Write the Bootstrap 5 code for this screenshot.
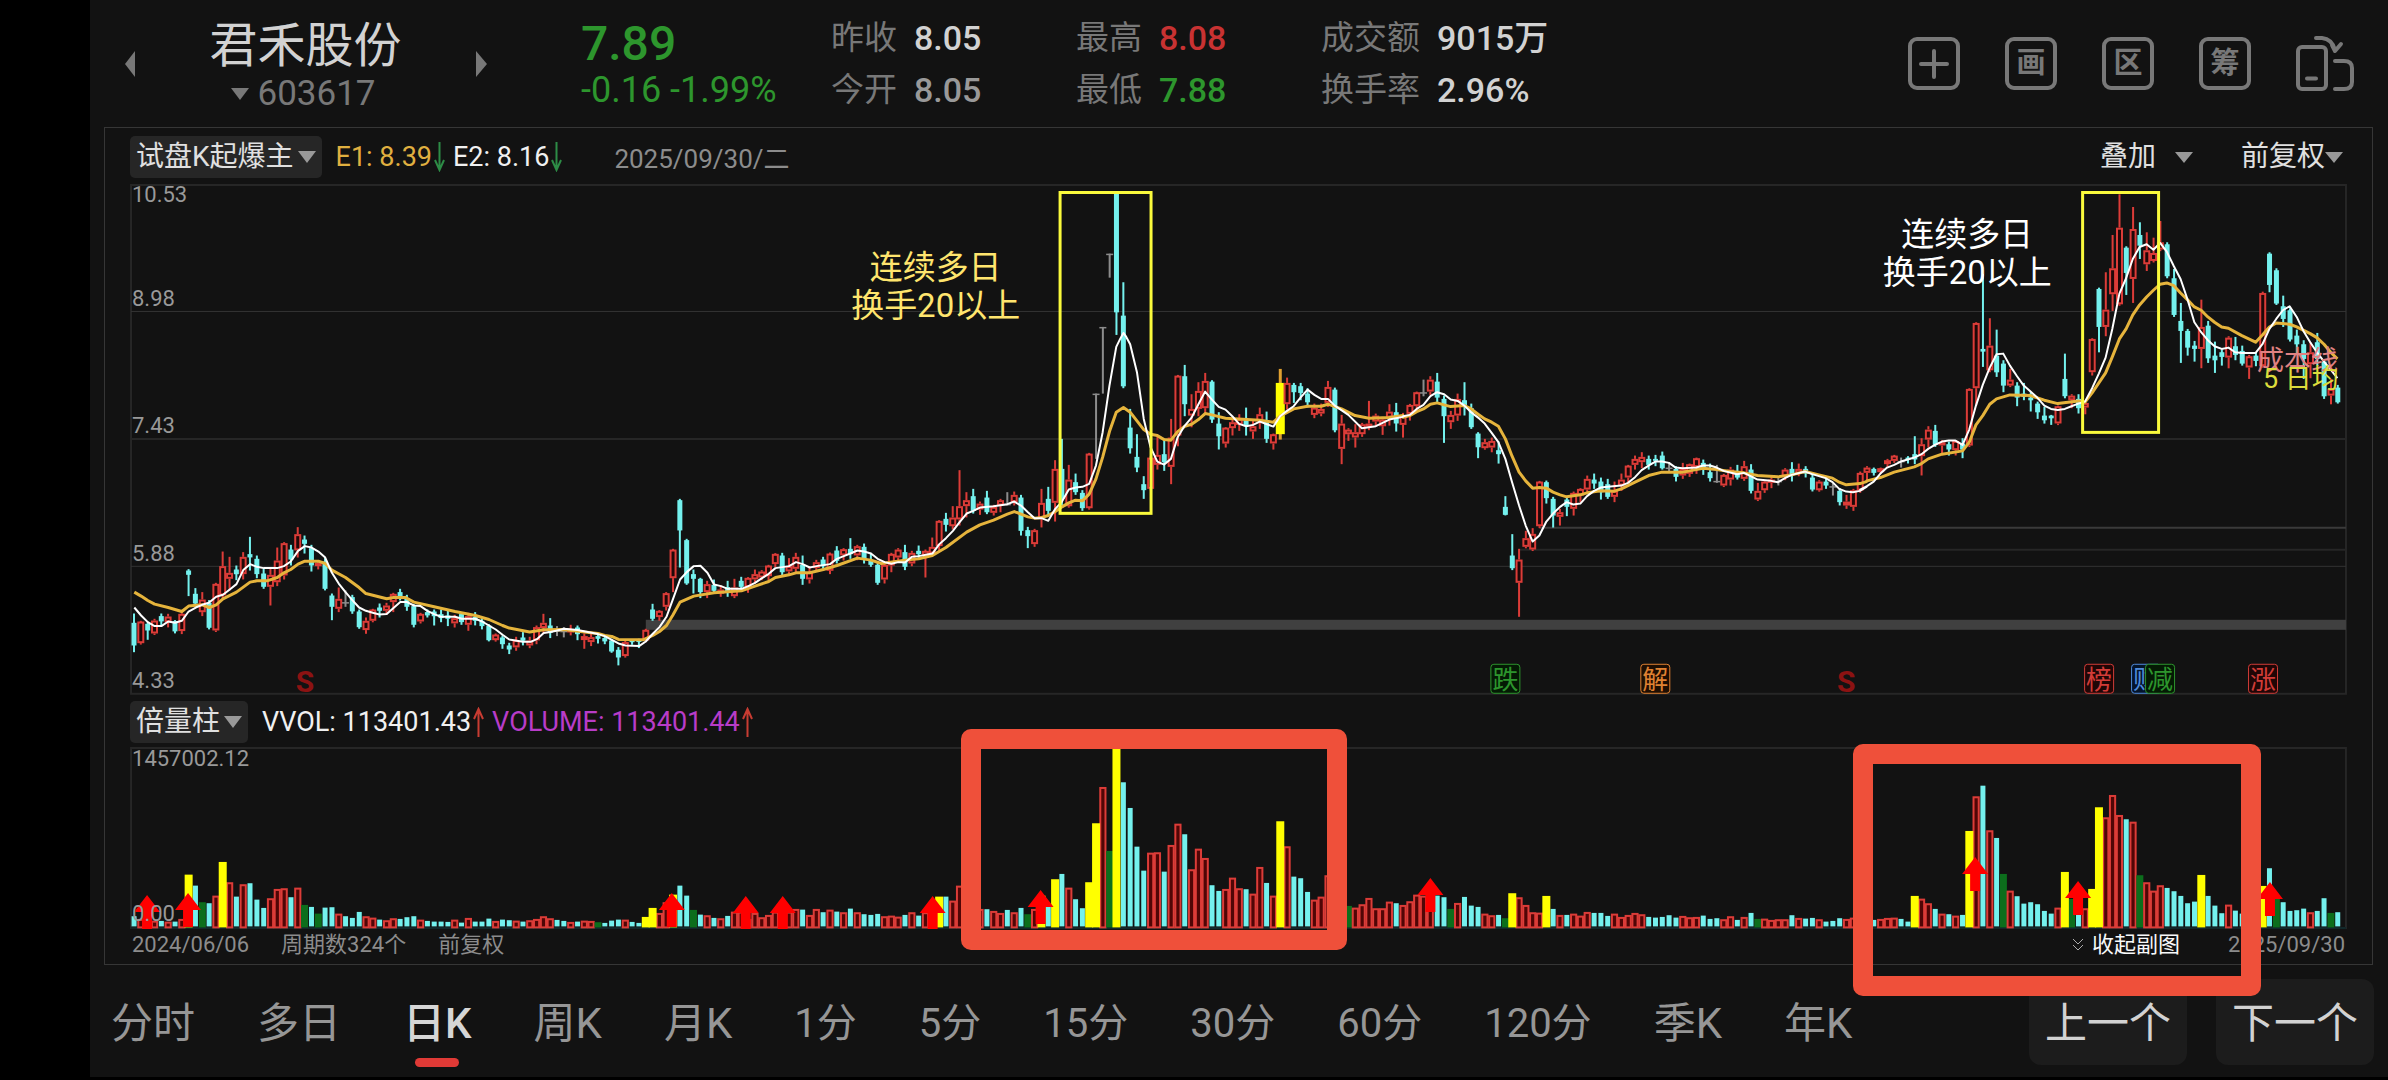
<!DOCTYPE html>
<html lang="zh-CN">
<head>
<meta charset="utf-8">
<meta name="viewport" content="width=device-width, initial-scale=1">
<title>君禾股份 603617</title>
<link rel="stylesheet" href="https://cdn.jsdelivr.net/npm/bootstrap@5.3.0/dist/css/bootstrap.min.css">
<style>
body{background:#000;color:#d2d2d2;font-family:Roboto,"Noto Sans CJK SC",sans-serif;min-height:100vh}
button{font-family:inherit}
.app-shell{margin-left:90px;background:#121212;min-height:1077px}
.top-bar{height:127px;padding:0 34px 0 35px}
.plain-btn{background:none;border:0;padding:0;color:inherit;line-height:1;display:flex;align-items:center}
.stock-picker{width:362px;margin-right:94px}
.stock-name{font-size:48px;line-height:60px;color:#d2d2d2}
.stock-code{font-size:35px;line-height:36px;color:#787878;gap:8px;padding-right:4px}
.price-box{width:250px;color:#2d962d;font-weight:500}
.price-now{font-size:48px;line-height:52px}
.price-diff{font-size:36px;line-height:40px;white-space:nowrap;font-weight:400}
.quote-col{width:245px;font-size:34px;line-height:52px;margin:0}
.quote-col dt{font-weight:400;color:#787878;font-size:33px}
.quote-col dd{margin:0;font-weight:500}
.quote-col .pair{display:flex;gap:17px;white-space:nowrap}
.c-down{color:#2d962d}.c-up{color:#c83232}.c-flat{color:#999}
.tool-set{gap:45px;color:#787878}
.tool-box{width:52px;height:53px;border:4px solid #787878;border-radius:9px;justify-content:center;font-size:29px;font-weight:700}
.panel-box{margin:0 15px 0 14px;border:1px solid #363636;padding:0 25px;height:838px}
.bar-row{height:56px;padding-top:2px;font-size:27px}
.bar-row.second{height:52px}
.side-btn{font-size:28px;color:#e0e0e0}
.pick-btn{background:#262626;border-radius:5px;height:42px;padding:0 6px;font-size:28px;color:#e0e0e0;gap:4px;margin-right:14px}
.ind-val{display:flex;align-items:center;gap:2px;color:#f0f0f0;white-space:nowrap}
.c-gold{color:#e0b040}.c-violet{color:#b83cc8}
.date-txt{color:#8c8c8c;font-size:26px}
.chart-svg{display:block;width:100%;height:auto}
.foot-row{font-size:22px;line-height:32px;color:#8c8c8c;padding:0 2px}
.foot-item{margin-left:32px}
.mark-frame{position:absolute;border:20px solid #ef503a;border-radius:10px;z-index:3;pointer-events:none}
.frame-a{left:37.5%;width:17.4%;top:-18px;height:221px}
.frame-b{left:77.7%;width:18.4%;top:-3px;height:252px}
.period-bar{height:112px;padding:2px 14px 0 21px}
.period-list{gap:62px;font-size:42px;padding-top:3px}
.period-list a{color:#969696;text-decoration:none;line-height:60px;position:relative;white-space:nowrap}
.period-list a.minute{font-size:40px}
.period-list a.active{color:#d6d6d6;font-weight:500}
.period-list a.active::after{content:"";position:absolute;left:50%;margin-left:-22px;bottom:-13px;width:44px;height:9px;border-radius:5px;background:#e03a36}
.step-btn{background:#1c1c1c;border-radius:12px;width:158px;height:86px;padding-top:4px;font-size:42px;color:#d2d2d2;justify-content:center}
svg text{font-family:Roboto,"Noto Sans CJK SC",sans-serif}
</style>
<script src="https://cdn.jsdelivr.net/npm/bootstrap@5.3.0/dist/js/bootstrap.bundle.min.js"></script>
</head>
<body>
<div class="app-shell">
  <header class="top-bar d-flex align-items-center">
    <div class="stock-picker d-flex align-items-center justify-content-between">
      <button class="plain-btn" aria-label="上一只"><svg width="10" height="26"><path d="M10 0V26L0 13Z" fill="#787878"/></svg></button>
      <div class="text-center">
        <div class="stock-name">君禾股份</div>
        <div class="stock-code d-flex align-items-center justify-content-center"><svg width="18" height="12"><path d="M0 0H18L9 12Z" fill="#787878"/></svg>603617</div>
      </div>
      <button class="plain-btn" aria-label="下一只"><svg width="11" height="26"><path d="M0 0V26L11 13Z" fill="#787878"/></svg></button>
    </div>
    <div class="price-box"><div class="price-now">7.89</div><div class="price-diff">-0.16 -1.99%</div></div>
    <dl class="quote-col"><div class="pair"><dt>昨收</dt><dd>8.05</dd></div><div class="pair"><dt>今开</dt><dd class="c-flat">8.05</dd></div></dl>
    <dl class="quote-col"><div class="pair"><dt>最高</dt><dd class="c-up">8.08</dd></div><div class="pair"><dt>最低</dt><dd class="c-down">7.88</dd></div></dl>
    <dl class="quote-col"><div class="pair"><dt>成交额</dt><dd>9015万</dd></div><div class="pair"><dt>换手率</dt><dd>2.96%</dd></div></dl>
    <div class="tool-set d-flex align-items-center ms-auto">
      <button class="plain-btn tool-box" aria-label="添加"><svg width="30" height="30" stroke="#787878" stroke-width="4" stroke-linecap="round"><path d="M15 2V28M2 15H28"/></svg></button>
      <button class="plain-btn tool-box">画</button>
      <button class="plain-btn tool-box">区</button>
      <button class="plain-btn tool-box">筹</button>
      <button class="plain-btn" aria-label="旋转屏幕"><svg width="58" height="56" fill="none" stroke="#787878" stroke-width="4" stroke-linecap="round" stroke-linejoin="round"><rect x="2" y="11" width="28" height="42" rx="4"/><path d="M11 42.500H20M39 25H48Q56 25 56 32V46Q56 53 48 53H39M20 2H26Q36 3 39 14M39 15L45 8M39 15L36 9"/></svg></button>
    </div>
  </header>

  <main class="panel-box">
    <div class="bar-row d-flex align-items-center">
      <button class="plain-btn pick-btn">试盘K起爆主<svg width="18" height="12"><path d="M0 0H18L9 12Z" fill="#999"/></svg></button>
      <span class="ind-val c-gold me-2">E1: 8.39<svg width="11" height="30" fill="none" stroke="#2d8c46" stroke-width="2"><path d="M5.500 0V28M1 18L5.500 28L10 18"/></svg></span>
      <span class="ind-val">E2: 8.16<svg width="11" height="30" fill="none" stroke="#2d8c46" stroke-width="2"><path d="M5.500 0V28M1 18L5.500 28L10 18"/></svg></span>
      <span class="date-txt ms-5 ps-1 pt-1">2025/09/30/二</span>
      <button class="plain-btn side-btn ms-auto" style="gap:19px">叠加<svg width="18" height="11"><path d="M0 0H18L9 11Z" fill="#999"/></svg></button>
      <button class="plain-btn side-btn ms-5 me-1">前复权<svg width="18" height="11"><path d="M0 0H18L9 11Z" fill="#999"/></svg></button>
    </div>
    <svg class="chart-svg" id="priceChart" viewBox="129 185 2218 511" role="img" aria-label="日K线图"></svg>
    <div class="bar-row second d-flex align-items-center">
      <button class="plain-btn pick-btn">倍量柱<svg width="18" height="12"><path d="M0 0H18L9 12Z" fill="#999"/></svg></button>
      <span class="ind-val me-2">VVOL: 113401.43<svg width="11" height="30" fill="none" stroke="#c83c32" stroke-width="2"><path d="M5.500 30V2M1 12L5.500 2L10 12"/></svg></span>
      <span class="ind-val c-violet">VOLUME: 113401.44<svg width="11" height="30" fill="none" stroke="#c83c32" stroke-width="2"><path d="M5.500 30V2M1 12L5.500 2L10 12"/></svg></span>
    </div>
    <div class="position-relative">
      <svg class="chart-svg" id="volumeChart" viewBox="129 748 2218 182" role="img" aria-label="成交量图"></svg>
      <div class="foot-row d-flex align-items-center">
        <span>2024/06/06</span><span class="foot-item">周期数324个</span><span class="foot-item">前复权</span>
        <button class="plain-btn ms-auto gap-2 text-light"><svg width="12" height="14" fill="none" stroke="#aaa" stroke-width="1"><path d="M1 1L6 6L11 1M1 7L6 12L11 7"/></svg>收起副图</button>
        <span class="ms-5">2025/09/30</span>
      </div>
      <div class="mark-frame frame-a"></div>
      <div class="mark-frame frame-b"></div>
    </div>
  </main>

  <footer class="period-bar d-flex align-items-center">
    <nav class="period-list d-flex align-items-center">
      <a href="#">分时</a><a href="#">多日</a><a href="#" class="active" aria-current="page">日K</a><a href="#">周K</a><a href="#">月K</a><a href="#" class="minute">1分</a><a href="#" class="minute">5分</a><a href="#" class="minute">15分</a><a href="#" class="minute">30分</a><a href="#" class="minute">60分</a><a href="#" class="minute">120分</a><a href="#">季K</a><a href="#">年K</a>
    </nav>
    <div class="d-flex ms-auto" style="gap:29px">
      <button class="plain-btn step-btn">上一个</button>
      <button class="plain-btn step-btn">下一个</button>
    </div>
  </footer>
</div>

<script>
const X0 = 133, PITCH = 6.826;
const RED = '#dc3c38', CYAN = '#74f1ee', GREY = '#8c8c8c';
// each segment: left origin, horizontal scale, top origin; vertical scale is 3 in all of them
const SEG = {
  A:[110,2.063,460], B:[610,3,460], C:[850,2.8,180], D:[1400,3,360], E:[1860,2.97,180]
};
// candles: colour, high, body top, body bottom, low
const CANDLES = [
['A',`c464,492,560,580 r486,488,553,556 c490,495,515,543 r480,485,524,526 c464,472,488,500 r465,473,490,506 c484,487,518,524 r460,465,517,526 c331,335,348,412 c388,405,434,440 r400,422,460,472 c424,432,507,512 r372,375,515,518 r278,322,410,420 r294,342,360,395 c320,332,346,364 r280,294,346,362 c234,286,296,335 c290,300,346,358 c330,344,384,390 r330,348,384,440 r266,305,370,382 r250,253,350,362 c258,272,302,320 r205,226,275,296 c230,242,255,284 c258,268,320,338 r306,312,322,332 c298,308,390,395 c404,410,444,484 r386,420,450,460 g395,430,434,444 c408,415,458,465 c452,458,505,510 r476,486,514,525 r450,452,486,490 c434,446,456,476 r432,440,456,468 r402,405,430,460 c390,400,416,425 c408,418,444,456 c436,442,498,506 r462,465,488,494 c452,460,470,476 c452,458,472,500 c452,466,478,490 c456,470,480,502 r468,478,494,506 c462,466,490,498 r462,472,498,516 c460,474,486,500 c478,486,502,512 c496,500,544,548 r524,527,544,546 c530,536,556,570 c552,560,572,586 r534,544,566,576 c520,536,546,560 r534,545,560,568 r500,505,545,556 r465,492,508,522 c478,500,522,538 g502,515,518,532 g505,516,520,536 r498,512,520,530 c500,506,526,544 r524,532,544,570 r520,535,550,562 c525,532,540,554 c530,538,548,556`],
['B',`c540,545,578,582 c565,573,596,620 r545,550,592,596 c542,545,550,558 c540,545,548,568 r510,513,545,550 c435,452,480,486 r454,456,475,486 r400,403,444,455 r270,272,358,400 c120,124,215,326 c240,244,374,378 c332,346,360,404 c357,360,400,418 r366,376,400,418 c362,378,396,402 r380,392,405,414 c366,385,402,414 r360,386,412,418 c354,366,384,392 r355,357,385,402 r332,346,362,374 r334,338,356,364 r318,320,352,364 r283,285,316,325 c282,290,340,350 r298,322,338,346 r282,294,330,344 c290,318,360,378 r322,340,362,374 r303,310,328,338 c294,302,322,330 r281,284,336,346 c262,275,306,314 r268,271,290,305 c238,270,286,300 r258,262,290,304 c254,264,300,314 c282,304,318,324 c310,318,372,378 r314,318,362,374 r282,285,320,340 r268,272,296,312 c258,280,324,334 r276,282,314,322 c260,276,286,298 r272,276,290,356 r236,264,284,294 r184,186,262,280 c162,180,198,218 r142,176,202,212 r34,142,182,200 r100,124,142,176 c90,112,156,164 r128,134,152,168 c96,116,160,166 r138,144,162,170 r120,124,140,160 g100,135,136,140 r98,108,130,140 c108,116,216,230 c204,214,232,268 r210,214,256,264 r90,132,178,206 c84,120,156,172 r4,30,132,188`],
['C',`c780,870,960,980 r858,902,982,984 c884,910,940,948 c934,942,988,996 r822,824,988,990 g644,644,648,840 g444,444,448,644 g224,224,228,296 c44,44,400,468 c310,410,622,628 c690,746,808,824 c766,834,866,880 c892,916,934,960 r832,836,930,932 r768,828,858,872 c780,826,850,876 r720,776,864,916 r588,590,770,802 c558,592,676,712 r646,690,710,745 r610,636,690,712 r582,606,688,704 c604,608,722,732 c700,734,772,812 r745,746,794,806 r716,730,748,770 r706,720,738,756 c686,724,742,770 r726,742,758,780 r686,706,726,750 c698,726,780,792 r764,766,794,812 y570,612,766,782 r596,612,676,692 c612,618,640,672 c612,622,642,664 c628,644,670,686 r674,686,708,718 r674,690,704,712 r606,624,672,684 c626,632,754,760 r708,734,810,856 r748,752,766,786 r736,760,776,806 r732,736,766,774 r666,734,742,754 r704,710,728,742 r716,722,742,768 r676,698,716,740 c672,700,734,758 r702,708,738,776`],
['D',`r135,138,165,185 r98,100,142,155 g62,100,101,112 r52,62,98,108 c42,68,116,130 c110,120,172,252 r156,168,190,210 r104,120,170,186 c70,124,140,170 c134,148,205,210 c220,224,265,298 r240,250,268,272 r236,246,266,280 c248,274,286,314 c412,444,468,470 c526,590,628,634 r570,602,672,774 r516,538,564,568 r508,525,572,575 r366,368,502,508 c365,370,418,434 c414,420,470,506 r450,460,474,500 c412,422,444,472 r398,402,450,470 r388,390,410,430 r350,360,392,405 c344,362,374,390 c356,368,400,422 c360,376,414,420 r368,396,414,430 r344,362,380,396 r318,320,356,372 r290,300,318,332 r280,294,310,328 c290,300,318,332 c288,300,306,322 c278,290,328,332 g310,326,330,340 c322,330,354,368 r312,330,350,360 r314,316,345,354 r296,298,325,345 c302,312,332,348 c314,340,358,368 g318,366,368,372 r345,348,380,384 r324,332,362,380 c318,345,356,362 r306,322,360,366 c316,332,396,404 r372,396,422,426 r364,368,394,402 r350,362,372,388 g355,366,368,380 r328,332,352,364 c310,330,350,368 r314,330,344,352 c322,330,344,356 c346,356,392,398 r364,368,394,398 c356,368,380,390 g372,382,384,410 c388,396,430,440 r408,428,440,450 r390,394,444,456 r338,342,395,402 r322,326,342,366`],
['E',`c866,870,882,890 r866,868,880,885 r840,844,856,864 r828,830,846,852 g836,846,848,866 c832,836,842,854 c772,826,842,856 r778,796,832,890 r742,752,782,806 c738,756,798,804 r784,790,800,824 c788,796,812,830 r784,786,814,830 c778,794,812,838 r628,630,800,804 r430,432,628,680 c285,510,518,564 r418,500,574,580 c452,530,580,594 c544,554,620,640 r570,602,620,624 c610,620,656,682 c612,644,654,664 c640,656,664,698 c668,674,700,720 c684,710,724,734 c708,710,718,738 r680,682,734,738 c524,600,652,658 r646,650,664,688 c646,660,688,704 r668,672,686,706 r478,480,580,590 c326,330,444,520 r280,392,444,472 r168,268,346,396 r46,146,376,380 c202,206,282,348 r84,150,300,372 c130,168,200,240 r160,214,256,276 r176,222,246,250 r126,190,212,216 c190,196,292,298 c270,298,408,414 c372,426,456,552 c450,456,506,530 c486,500,510,548 r362,444,510,568 c426,440,538,552 c488,530,544,582 c512,520,534,560 r472,476,536,568 c474,502,528,544 c500,516,554,560 r528,532,566,600 c520,530,546,562 r338,342,562,564 c220,224,318,340 c268,274,374,378 c350,382,420,444 c388,394,482,488 c452,470,496,528 c484,496,540,600 r490,520,556,598 c462,490,540,560 c544,548,652,660 r600,630,650,676 c618,626,670,674`]
];
const FAST = [
['A','48 446,62 470,76 490,90 502,104 502,118 488,132 492,146 486,160 458,175 446,188 438,202 432,217 414,231 408,245 392,259 376,273 334,287 316,301 324,315 328,343 328,357 322,371 308,386 276,400 262,414 266,428 278,442 296,456 342,470 374,484 400,498 424,512 446,526 456,540 462,554 467,569 466,583 448,597 430,611 430,625 440,639 442,653 456,667 466,681 474,710 474,724 480,752 480,766 488,780 500,794 512,808 528,822 542,850 549,866 549,880 540,893 523,907 520,921 515,935 510,963 514,1005 526,1019 532'],
['B','23 554,44 560,85 562,105 548,126 525,146 505,167 474,187 420,208 362,228 340,249 322,269 321,290 342,310 377,331 382,351 390,392 390,413 382,433 372,454 358,474 345,494 328,535 322,556 310,576 316,597 326,617 322,658 316,679 300,699 292,719 284,740 275,760 278,781 284,801 300,822 310,842 315,863 310,883 311,904 294,924 292,965 284,986 256,1006 238,1027 216,1047 190,1068 164,1088 156,1108 146,1149 142,1190 136,1211 128,1231 140,1252 160,1272 178,1293 178,1313 186,1334 150'],
['C','592 968,611 932,630 926,649 924,668 915,687 860,706 760,725 620,744 504,755 480,764 462,772 474,783 496,802 580,821 720,840 805,859 848,878 857,897 840,916 775,936 740,955 716,974 676,993 638,1012 662,1031 684,1050 692,1069 712,1088 735,1108 742,1127 738,1146 728,1184 743,1203 712,1222 696,1241 682,1260 656,1280 632,1299 648,1318 660,1337 660,1356 680,1394 708,1432 748,1471 742,1509 722,1547 714'],
['D','8 172,28 168,49 150,69 138,90 112,110 100,131 106,151 122,172 126,192 140,212 160,233 176,253 194,274 222,294 250,315 300,335 370,356 440,376 500,397 548,417 530,438 488,458 464,479 444,499 430,519 437,540 434,560 412,581 396,601 386,622 384,663 380,683 372,704 355,724 334,745 320,765 308,785 308,806 312,826 326,847 328,888 326,908 320,929 320,949 326,970 336,1010 346,1031 342,1051 352,1072 362,1113 366,1133 370,1154 358,1174 348,1215 338,1236 346,1276 358,1297 370,1317 390,1338 398,1358 400,1379 396,1399 384'],
['E','0 932,20 922,40 908,60 884,80 866,101 858,121 848,141 842,161 836,182 826,202 810,222 798,243 788,263 785,283 785,304 798,324 752,344 680,364 618,385 566,405 526,425 524,445 560,466 592,486 620,506 638,526 656,547 680,567 690,587 693,608 690,628 682,648 674,668 668,689 628,709 584,729 536,749 450,770 344,790 298,810 240,830 204,851 196,871 212,891 192,911 218,932 262,952 300,972 360,993 430,1013 460,1033 484,1053 502,1074 510,1094 506,1114 520,1134 522,1175 522,1195 496,1216 450,1236 420,1256 394,1276 382,1297 414,1317 456,1337 490,1357 520,1378 548,1398 572,1418 598']
];
const SLOW = [
['A','48 400,62 412,76 425,90 436,118 446,146 458,160 442,188 438,203 446,217 438,231 420,259 400,287 370,301 366,322 366,343 356,357 342,371 332,386 316,400 307,428 307,442 314,456 334,484 356,512 386,526 404,569 420,583 416,608 416,625 430,667 444,710 458,752 470,780 482,808 500,822 508,864 520,893 513,935 512,977 520,1005 524,1019 530'],
['B','3 533,23 542,97 543,126 530,146 518,167 500,187 468,208 430,249 412,310 402,392 396,433 382,474 368,494 356,535 348,556 342,597 342,638 332,679 320,740 298,781 304,812 314,883 304,924 300,965 290,1006 266,1068 220,1108 198,1149 184,1190 166,1211 158,1252 174,1272 178,1293 176,1313 170,1334 158'],
['C','592 984,611 972,630 964,649 966,668 946,687 900,706 835,725 758,744 700,764 686,783 700,802 726,821 752,840 766,859 770,878 782,897 784,916 758,936 742,955 736,974 722,993 704,1012 708,1050 718,1146 724,1184 730,1203 712,1241 690,1280 682,1318 682,1337 676,1375 690,1413 710,1452 718,1509 716,1547 710'],
['D','8 175,28 170,49 158,69 150,90 136,110 132,131 138,151 143,192 140,212 150,233 166,253 180,274 190,294 202,315 240,335 292,356 340,376 366,397 388,417 386,438 388,458 400,479 408,499 414,540 408,560 402,601 396,642 397,663 390,704 370,745 350,785 340,847 340,867 336,908 328,949 332,990 338,1031 342,1072 350,1133 354,1174 348,1215 338,1256 348,1297 358,1317 370,1338 378,1379 374,1399 368'],
['E','20 906,60 896,101 880,161 864,182 854,202 840,243 826,304 816,324 790,344 738,364 710,385 676,405 660,445 648,506 650,547 664,587 674,648 666,668 670,689 642,729 582,749 534,770 480,790 450,810 408,830 378,851 354,871 334,891 316,911 312,932 320,952 342,972 362,993 384,1013 394,1033 414,1053 430,1074 444,1094 448,1134 470,1175 490,1195 468,1216 444,1236 432,1276 436,1297 444,1337 464,1357 476,1378 496,1398 520,1418 540']
];
const linePoints = parts => parts.map(([k,s]) => s.split(',').map(p => {
  const [x,y] = p.split(' ').map(Number), g = SEG[k];
  return (g[0]+x/g[1]).toFixed(1)+','+(g[2]+y/3).toFixed(1);
}).join(' ')).join(' ');
const label = (x,y,t,size,fill,extra='') => `<text x="${x}" y="${y}" font-size="${size}" fill="${fill}" ${extra}>${t}</text>`;

let out = '<g fill="none" stroke="#262626" stroke-width="2"><rect x="130" y="186" width="2216" height="509"/><path d="M130 440H2346M1519 551H2346"/><path stroke="#333" stroke-width="1" d="M130 312.500H2346M130 567.500H2346"/><path stroke="#3a3a3a" d="M1539 529H2346"/></g><rect x="645" y="621" width="1701" height="10" fill="#404040"/>';
out += label(131,203,'10.53',22,'#999')+label(131,307,'8.98',22,'#999')+label(131,434,'7.43',22,'#999')+label(131,562,'5.88',22,'#999')+label(131,689,'4.33',22,'#999');
let n = 0;
for (const [k,s] of CANDLES) for (const tok of s.trim().split(/\s+/)) {
  const [hi,top,bot,lo] = tok.slice(1).split(',').map(v => SEG[k][2]+v/3);
  const x = X0+PITCH*n++;
  const bar = (w,a,b,f) => `<rect x="${(x-w/2).toFixed(1)}" y="${a.toFixed(1)}" width="${w}" height="${Math.max(b-a,1.5).toFixed(1)}" fill="${f}"/>`;
  if (tok[0]==='c') out += bar(2,hi,lo,CYAN)+bar(5,top,bot,CYAN);
  else if (tok[0]==='g') out += bar(2,hi,lo,GREY)+bar(7,top,bot,GREY);
  else if (tok[0]==='y') out += bar(3,hi,lo,'#e0a030')+bar(9,top,bot,'#ff0');
  else out += bar(2,hi,top,RED)+bar(2,bot,lo,RED)+`<rect x="${(x-2.5).toFixed(1)}" y="${(top+1).toFixed(1)}" width="5" height="${Math.max(bot-top-2,1).toFixed(1)}" fill="#200808" stroke="${RED}" stroke-width="2"/>`;
}
out += `<polyline points="${linePoints(SLOW)}" fill="none" stroke="#e6b43c" stroke-width="3" stroke-linejoin="round"/><polyline points="${linePoints(FAST)}" fill="none" stroke="#fff" stroke-width="2" stroke-linejoin="round"/>`;
out += '<g fill="none" stroke="#fafa3c" stroke-width="3"><rect x="1059.500" y="193.500" width="91" height="321"/><rect x="2082.500" y="193.500" width="76" height="240"/></g>';
out += label(935,280,'连续多日',33,'#ffe56e','text-anchor="middle"')+label(935,318,'换手20以上',33,'#ffe56e','text-anchor="middle"');
out += label(1967,247,'连续多日',33,'#fff','text-anchor="middle"')+label(1967,285,'换手20以上',33,'#fff','text-anchor="middle"');
out += label(2257,371,'成本线',27,'#e08282')+label(2263,389,'5 日均',27,'#dcdc3c');
const tag = (x,t,c,bg) => `<rect x="${x+.5}" y="665.500" width="29" height="29" rx="3" fill="${bg}" stroke="${c}"/>`+label(x+15,690,t,26,c,'text-anchor="middle"');
out += tag(1490,'跌','#2d962d','#041a04')+tag(1640,'解','#e08232','#1e0e02')+tag(2084,'榜','#d23c38','#200606')+tag(2131,'财','#508cdc','#04142a')+tag(2145,'减','#2d962d','#041a04')+tag(2248,'涨','#d23c38','#200606');
out += label(304,693,'S',30,'#8c1212','font-weight="700" text-anchor="middle"')+label(1846,693,'S',30,'#8c1212','font-weight="700" text-anchor="middle"');
document.getElementById('priceChart').innerHTML = out;

// volume bars: colour and top, each run with its own top origin
const VOLUMES = [
[690,'c682 r690 r700 r695 c696 r698 c698 r690 y557 c590 G640 c643 r620 y519 r580 c623 r586 c583 c632 c657 r628 r600 r598 c625 r596 G648 c654 G674 c656 c655 r674 c682 c687 c669 r682 r686 c692 r694 r688 c690 c685 c682 r692 c696 c698 c698 c699 r692 c701 r687 c698 c698 c689 r696 c692 c694 r695 c698 r694 r690 r682 r688 c693 c696 r699 c698 r695 r696 G700 c702 c695 c692 r692 c699 c702 y684 y657 r672 r640 y617 c590 c620 G663 c677 r679 c687 r688 c681 r668 r668 r690 r672 r685 r678 r668 r668 r668 r660 c662 r678 r660 c670 r662 c668 r670 c659 r670 c676 c678 c675 r682 r680 r683 c678 r670 c680 r670 r668 y623 c623 r635 r590'],
[710,'r560 r590 r600 c601 r606 r612 c603 r610 c597 G616 r600 y560 c590 y511 c495 r536 c571 c598 y520 y343 r234 G426 y119 c220 c297 c413 c485 r431 r430 c488 r408 r344 c376 r481 r419 r447 c529 c546 r540 r506 r538 c541 r554 r474 c522 r560 y337 r412 c503 c508 c549 r572 r563 r499 r560 r580 G591 r596 r586 r567 r598 r598 r578 c583 r588 r577 r557 r560 r600 c560 c565 G600'],
[840,'r192 c174 c200 c204 r224 r229 c228 G238 y163 r175 r198 r220 r221 y171 c210 r228 c228 r224 r230 r219 c222 c222 c231 r224 r234 r228 r222 r226 c234 c236 c234 c229 c236 r231 r235 r234 c230 c240 c238 r241 r232 c243 r234 c222 G240 r239 r243 r241 r241 c229 r237 c239 c237 r241 c248 c246 c238 r240 r236'],
[640,'r840 r842 c843 r840 r837 r836 c840 c848 y771 r779 r793 c810 r824 c826 r830 c828 y576 r472 c440 r574 c597 G705 r755 c772 c794 c790 c796 c816 c824 r806 y699 G780 c828 r808 y750 y505 r535 r468 r528 c541 r548 G709 r730 r755 r739 c747 c757 c771 c793 c788 y708 c771 c800 c823 r797 c815 c824 r840 c830 y741 c688 G780 c790 c816 c814 c809 r820 c816 c778 G822 c820']
];
out = '<g fill="none" stroke="#262626" stroke-width="2"><path d="M130 930V749H2346V930"/><path d="M130 929H2346" stroke="#12282a"/></g>';
n = 0;
let over = '';
for (const [base,s] of VOLUMES) for (const tok of s.split(' ')) {
  const x = X0+PITCH*n++, y = base+tok.slice(1)/3, b = 928.5;
  const solid = (w,f,e) => `<rect x="${(x-w/2).toFixed(1)}" y="${y.toFixed(1)}" width="${w}" height="${(e-y).toFixed(1)}" fill="${f}"/>`;
  if (tok[0]==='c') out += solid(5,CYAN,b-1);
  else if (tok[0]==='G') out += solid(7,'#0c6e1c',b);
  else if (tok[0]==='y') over += solid(8,'#ff0',b);
  else out += `<rect x="${(x-2.6).toFixed(1)}" y="${(y+1).toFixed(1)}" width="5.200" height="${(b-y-1).toFixed(1)}" fill="#500606" stroke="${RED}" stroke-width="2"/>`;
}
out += over;
for (const [x,y] of [[146,896],[187,894],[671,894],[745,897],[782,897],[932,897],[1040,891],[1430,879],[1975,858],[2078,882],[2270,883]])
  out += `<path d="M${x} ${y}l13 17h-8v17h-10v-17h-8Z" fill="#f00"/>`;
out += label(131,767,'1457002.12',22,'#999')+label(131,922,'0.00',22,'#999');
document.getElementById('volumeChart').innerHTML = out;
</script>
</body>
</html>
